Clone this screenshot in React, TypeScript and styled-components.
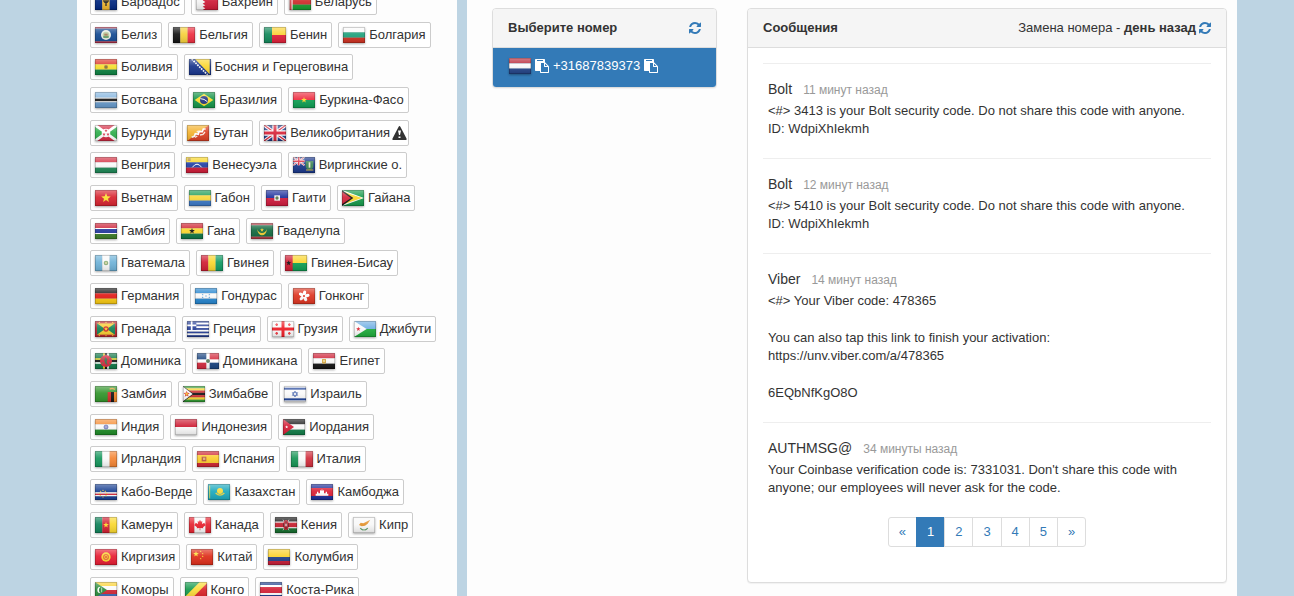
import React from "react";
import styled, { createGlobalStyle } from "styled-components";

const GlobalStyle = createGlobalStyle`
  *, *::before, *::after { box-sizing: border-box; }
  body {
    margin: 0;
    background: #bdd4e3;
    color: #333;
    font: 13px/18px "Liberation Sans", Arial, sans-serif;
  }
  a { color: #337ab7; text-decoration: none; }
  ul { list-style: none; margin: 0; padding: 0; }
`;

/* ---------- flags, drawn on a 66 x 48 canvas ---------- */

type Art = React.ReactNode;

const R = (x: number, y: number, w: number, h: number, f: string) => (
  <rect x={x} y={y} width={w} height={h} fill={f} />
);
const P = (d: string, f: string) => <path d={d} fill={f} />;
const L = (d: string, s: string, w: number) => <path d={d} stroke={s} strokeWidth={w} fill="none" />;
const C = (x: number, y: number, r: number, f: string) => <circle cx={x} cy={y} r={r} fill={f} />;

const bands = (colors: string[], weights?: number[], vertical = false): Art => {
  const w = weights ?? colors.map(() => 1);
  const total = w.reduce((a, b) => a + b, 0);
  const size = vertical ? 66 : 48;
  let at = 0;
  return colors.map((c, i) => {
    const start = (at / total) * size;
    at += w[i];
    const len = (w[i] / total) * size;
    return vertical ? (
      <rect key={i} x={start} y={0} width={len} height={48} fill={c} />
    ) : (
      <rect key={i} x={0} y={start} width={66} height={len} fill={c} />
    );
  });
};
const H = (...colors: string[]) => bands(colors);
const V = (...colors: string[]) => bands(colors, undefined, true);

const star = (cx: number, cy: number, r: number, fill: string): Art => {
  const pts = Array.from({ length: 10 }, (_, i) => {
    const a = (Math.PI / 5) * i - Math.PI / 2;
    const q = i % 2 ? r * 0.42 : r;
    return `${(cx + q * Math.cos(a)).toFixed(1)},${(cy + q * Math.sin(a)).toFixed(1)}`;
  });
  return <polygon points={pts.join(" ")} fill={fill} />;
};

const unionJack = (
  <>
    {R(0, 0, 66, 48, "#1f3a86")}
    {L("M0 0L66 48M66 0L0 48", "#fff", 10)}
    {L("M0 0L66 48M66 0L0 48", "#d8243a", 4)}
    {L("M33 0V48M0 24H66", "#fff", 16)}
    {L("M33 0V48M0 24H66", "#d8243a", 9)}
  </>
);

const flags: Record<string, Art> = {
  bb: <>{V("#00267f", "#f2b62c", "#00267f")}{L("M27 12V22Q33 30 39 22V12M33 8V36", "#222", 4)}</>,
  bh: <>{R(0, 0, 66, 48, "#ce1a36")}{P("M0 0H20L28 5L20 10L28 14L20 19L28 24L20 29L28 34L20 38L28 43L20 48H0Z", "#f4f4f4")}</>,
  by: <>{bands(["#cf2a2a", "#159a2f"], [2, 1])}{R(0, 0, 11, 48, "#f3dede")}{L("M5 0V48", "#d2454b", 5)}</>,
  bz: <>{bands(["#b8304a", "#134a92", "#b8304a"], [1, 8, 1])}{C(33, 24, 15, "#e9eee4")}{C(33, 24, 10, "#b9cda0")}{R(28, 20, 10, 6, "#a67a58")}{L("M25 30H41", "#3f8a50", 4)}</>,
  be: V("#111", "#f7d13a", "#ee2e40"),
  bj: <>{R(0, 0, 66, 24, "#fbd335")}{R(0, 24, 66, 24, "#e01f38")}{R(0, 0, 24, 48, "#11885a")}</>,
  bg: H("#fafafa", "#1fa27c", "#cf3020"),
  bo: <>{H("#dc3527", "#f6e02d", "#0d8241")}{C(33, 24, 6, "#b07b32")}{C(33, 24, 3, "#667d3c")}</>,
  ba: <>{R(0, 0, 66, 48, "#17348c")}{P("M18 0H62V46Z", "#fbd62e")}<path d="M8 0L56 48" fill="none" stroke="#fff" strokeWidth="5" strokeDasharray="5 3" /></>,
  bw: bands(["#84b5df", "#fff", "#161616", "#fff", "#6699ca"], [17, 3, 8, 3, 17]),
  br: <>{R(0, 0, 66, 48, "#149447")}{P("M5 24L33 5L61 24L33 43Z", "#fbdc2c")}{C(33, 24, 12, "#233580")}{L("M22 20Q34 20 43 29", "#fff", 3)}</>,
  bf: <>{H("#ee2b3f", "#0d9e52")}{star(33, 24, 9, "#fad829")}</>,
  bi: <>{R(0, 0, 66, 48, "#d52a43")}{P("M0 0L28 24L0 48ZM66 0L38 24L66 48Z", "#2fae4c")}{L("M0 0L66 48M66 0L0 48", "#fff", 8)}{C(33, 24, 13, "#fff")}{star(33, 17, 5, "#d52a43")}{star(27, 28, 5, "#d52a43")}{star(39, 28, 5, "#d52a43")}</>,
  bt: <>{R(0, 0, 66, 48, "#dc3f23")}{P("M0 0H66L0 48Z", "#f4b22e")}{L("M14 37L22 34L25 26L34 28L36 19L46 20L49 12L56 12", "#fff", 5)}{L("M24 37L31 33M39 30L48 28L54 21M29 22L34 18", "#fbe9de", 4)}</>,
  gb: unionJack,
  hu: H("#d32f42", "#fafafa", "#1c8755"),
  ve: <>{H("#f8d522", "#1f3fa5", "#ce1a36")}{L("M19 31Q33 12 47 31", "#fff", 3)}{R(5, 3, 9, 9, "#b48b3b")}</>,
  vg: <>{R(0, 0, 66, 48, "#18368a")}<g transform="scale(.52)">{unionJack}</g>{P("M38 12H61V27Q61 36 50 39Q38 36 38 27Z", "#3d8454")}{R(47, 16, 5, 16, "#f2ead0")}{L("M39 39H61", "#dbbd43", 3)}</>,
  vn: <>{R(0, 0, 66, 48, "#d8232f")}{star(33, 24, 15, "#fbe02e")}</>,
  ga: H("#1f9c55", "#fad83a", "#3a77c6"),
  ht: <>{H("#1b2e9c", "#cf193c")}{R(25, 16, 17, 16, "#f4f4f4")}{C(33, 24, 5, "#59764b")}</>,
  gy: <>{R(0, 0, 66, 48, "#159a4a")}{P("M0 0L66 24L0 48Z", "#fff")}{P("M0 4L60 24L0 44Z", "#fbd72c")}{P("M0 0L34 24L0 48Z", "#111")}{P("M0 5L27 24L0 43Z", "#d3233a")}</>,
  gm: bands(["#cc1f35", "#fff", "#22369b", "#fff", "#3d7d28"], [15, 3, 12, 3, 15]),
  gh: <>{H("#ce1f2e", "#fbd72c", "#0d7546")}{star(33, 24, 9, "#111")}</>,
  gp: <>{bands(["#b23b44", "#12683f", "#b23b44"], [1, 5, 1])}<path d="M18 18Q22 37 33 37Q45 37 48 18Q43 30 33 30Q23 30 18 18Z" fill="#f3cd2e" />{star(33, 21, 6, "#f3cd2e")}</>,
  gt: <>{V("#6eb2d8", "#fafafa", "#6eb2d8")}{C(33, 24, 7, "#8daf7a")}{C(33, 24, 3, "#e7dcaa")}</>,
  gn: V("#d11d33", "#fad72d", "#109a63"),
  gw: <>{R(0, 0, 66, 24, "#fbd62f")}{R(0, 24, 66, 24, "#0e9d52")}{R(0, 0, 23, 48, "#cf1b31")}{star(11, 24, 8, "#111")}</>,
  de: H("#181818", "#e21b17", "#f8c911"),
  hn: <>{H("#2585cf", "#fafafa", "#2585cf")}{star(33, 24, 3, "#4d98d6")}{star(23, 20, 3, "#4d98d6")}{star(43, 20, 3, "#4d98d6")}{star(23, 28, 3, "#4d98d6")}{star(43, 28, 3, "#4d98d6")}</>,
  hk: <>{R(0, 0, 66, 48, "#de3420")}{[0, 72, 144, 216, 288].map((a) => <ellipse key={a} cx="33" cy="15" rx="5" ry="8" fill="#fff" transform={`rotate(${a + 10} 33 24)`} />)}{C(33, 24, 3, "#de3420")}</>,
  gd: <>{R(0, 0, 66, 48, "#b8262f")}{R(6, 7, 54, 34, "#f6cd2e")}{P("M6 7L30 24L6 41ZM60 7L36 24L60 41Z", "#128254")}{C(33, 24, 8, "#cf2a2a")}{star(33, 24, 6, "#fbd72c")}{[13, 33, 53].map((x) => <React.Fragment key={x}>{star(x, 4, 3, "#fbd72c")}{star(x, 44, 3, "#fbd72c")}</React.Fragment>)}</>,
  gr: <>{bands(["#263f97", "#fff", "#263f97", "#fff", "#263f97", "#fff", "#263f97", "#fff", "#263f97"])}{R(0, 0, 28, 27, "#263f97")}{L("M14 0V27M0 13H28", "#fff", 5)}</>,
  ge: <>{R(0, 0, 66, 48, "#fafafa")}{L("M33 0V48M0 24H66", "#ee1b24", 9)}{L("M14 7V15M10 11H18M52 7V15M48 11H56M14 33V41M10 37H18M52 33V41M48 37H56", "#ee3b42", 4)}</>,
  dj: <>{H("#6faee3", "#1dab3a")}{P("M0 0L38 24L0 48Z", "#fafafa")}{star(13, 24, 7, "#dc2230")}</>,
  dm: <>{R(0, 0, 66, 48, "#0f7747")}{L("M0 18H66M27 0V48", "#fbd82e", 5)}{L("M0 24H66M33 0V48", "#151515", 6)}{L("M0 30H66M39 0V48", "#fff", 5)}{C(33, 24, 18, "#d5283e")}{P("M30 12L37 18L35 28L38 37L30 31L28 21Z", "#40704f")}{[22, 44].map((x) => <React.Fragment key={x}>{C(x, 18, 2, "#4b8b4b")}{C(x, 30, 2, "#4b8b4b")}</React.Fragment>)}</>,
  do: <>{R(0, 0, 66, 48, "#fff")}{R(0, 0, 28, 19, "#18437f")}{R(38, 0, 28, 19, "#d22a3d")}{R(0, 29, 28, 19, "#d22a3d")}{R(38, 29, 28, 19, "#18437f")}{C(33, 24, 6, "#547b5a")}</>,
  eg: <>{H("#ce1f35", "#fafafa", "#141414")}{P("M27 18H39V30L33 33L27 30Z", "#d6a944")}{C(33, 24, 3, "#f5e4a9")}</>,
  zm: <>{R(0, 0, 66, 48, "#31952a")}{R(38, 18, 10, 30, "#d62c2c")}{R(48, 18, 9, 30, "#171717")}{R(57, 18, 9, 30, "#f08528")}{L("M44 9L52 7L60 10", "#e59b2f", 4)}</>,
  zw: <>{bands(["#319a32", "#fad62d", "#cf2a2b", "#151515", "#cf2a2b", "#fad62d", "#319a32"])}{P("M0 0L32 24L0 48Z", "#111")}{P("M0 2L29 24L0 46Z", "#fafafa")}{star(11, 24, 10, "#d92e2e")}{star(11, 24, 6, "#f4c936")}</>,
  il: <>{R(0, 0, 66, 48, "#fafafa")}{R(0, 5, 66, 6, "#1e4298")}{R(0, 37, 66, 6, "#1e4298")}<path d="M33 15L41 28H25ZM33 33L25 20H41Z" fill="none" stroke="#3556a6" strokeWidth="2" /></>,
  in: <>{H("#f68e36", "#fafafa", "#1d8a25")}<circle cx="33" cy="24" r="6" fill="#a2a5d4" stroke="#4b53a4" strokeWidth="2" /></>,
  id: H("#ce1c33", "#fafafa"),
  jo: <>{H("#1c1c1c", "#fafafa", "#0f7b46")}{P("M0 0L33 24L0 48Z", "#d41d36")}{star(11, 24, 5, "#fff")}</>,
  ie: V("#15975c", "#fafafa", "#f58533"),
  es: <>{bands(["#ce2530", "#fbcb2b", "#ce2530"], [1, 2, 1])}{R(14, 17, 14, 14, "#b6563b")}{R(18, 20, 7, 7, "#ddad77")}</>,
  it: V("#159454", "#fafafa", "#d12d3c"),
  cv: <>{bands(["#173f92", "#fff", "#d3263a", "#fff", "#173f92"], [25, 4, 4, 4, 11])}{[[24, 19], [31, 22], [35, 28], [33, 35], [24, 39], [16, 35], [13, 28], [17, 22]].map(([x, y]) => <React.Fragment key={`${x}-${y}`}>{star(x, y, 3, "#f2cb38")}</React.Fragment>)}</>,
  kz: <>{R(0, 0, 66, 48, "#1ba9be")}{C(36, 21, 9, "#f5da38")}{L("M23 27Q36 40 49 27", "#e7d544", 4)}{L("M5 5V43", "#c8d45f", 3)}</>,
  kh: <>{bands(["#1b2c96", "#dc1e35", "#1b2c96"], [1, 2, 1])}{P("M14 35V29H18V23H22V28H27V22L29 17L31 21L33 14L35 21L37 17L39 22V28H44V23H48V29H52V35Z", "#fff")}</>,
  cm: <>{V("#0f8259", "#d21f32", "#fad82d")}{star(33, 24, 9, "#fbd72c")}</>,
  ca: <>{bands(["#e72330", "#fafafa", "#e72330"], [1, 2, 1], true)}{P("M33 8L36 14L40 12L39 21L46 17L48 22L51 24L42 31L43 34L34 33V40H32V33L23 34L24 31L15 24L18 22L20 17L27 21L26 12L30 14Z", "#e81e2c")}</>,
  ke: <>{bands(["#151515", "#fff", "#c51e2d", "#fff", "#146c2c"], [14, 3, 14, 3, 14])}{L("M24 8L42 40M42 8L24 40", "#eee", 2)}<ellipse cx="33" cy="24" rx="8" ry="15" fill="#c51e2d" />{L("M33 12V36M26 18V30M40 18V30", "#1d1d1d", 2)}{L("M31 20V28M35 20V28", "#fff", 2)}</>,
  cy: <>{R(0, 0, 66, 48, "#f8f8f8")}{P("M18 24L23 17L31 19L40 14L52 8L44 20L36 26L26 28Z", "#e2912b")}{L("M22 33Q26 40 32 38M44 33Q40 40 34 38", "#5c9a65", 4)}</>,
  kg: <>{R(0, 0, 66, 48, "#e81c32")}{C(33, 24, 14, "#fad52d")}<circle cx="33" cy="24" r="8" fill="#f2bb31" stroke="#e4422f" strokeWidth="2" />{L("M28 20Q33 24 38 28M38 20Q33 24 28 28", "#e4422f", 2)}</>,
  cn: <>{R(0, 0, 66, 48, "#de2c18")}{star(15, 15, 9, "#fbdc30")}{star(29, 7, 3, "#fbdc30")}{star(35, 14, 3, "#fbdc30")}{star(35, 22, 3, "#fbdc30")}{star(29, 29, 3, "#fbdc30")}</>,
  co: bands(["#fbd12b", "#203f88", "#c71c36"], [2, 1, 1]),
  km: <>{H("#fbd233", "#fafafa", "#cf2434", "#3c69b8")}{P("M0 0L36 24L0 48Z", "#2b8c3c")}<path d="M17 14A10 10 0 1 0 17 34A12 12 0 0 1 17 14Z" fill="#fff" />{L("M20 17V31", "#fff", 2)}</>,
  cg: <>{R(0, 0, 66, 48, "#fbdc38")}{P("M0 0H44L0 44Z", "#159a4d")}{P("M66 4V48H22Z", "#dc2429")}</>,
  cr: bands(["#1b3c8b", "#fff", "#d52036", "#fff", "#1b3c8b"], [9, 6, 18, 6, 9]),
  nl: H("#b72536", "#fafafa", "#244489"),
};

const FlagSvg = styled.svg`
  flex: none;
  display: block;
  filter: drop-shadow(0 1px 1px rgba(0, 0, 0, 0.35));
`;

const Flag = ({ code }: { code: string }) => (
  <FlagSvg width="22" height="16" viewBox="0 0 66 48" aria-hidden="true">
    <defs>
      <linearGradient id={`gloss-${code}`} x1="0" y1="0" x2="0" y2="1">
        <stop offset="0" stopColor="#fff" stopOpacity=".4" />
        <stop offset=".45" stopColor="#fff" stopOpacity=".08" />
        <stop offset="1" stopColor="#000" stopOpacity=".12" />
      </linearGradient>
    </defs>
    {flags[code]}
    <rect width="66" height="48" fill={`url(#gloss-${code})`} />
    <rect x="1" y="1" width="64" height="46" fill="none" stroke="#000" strokeOpacity=".22" strokeWidth="3" />
  </FlagSvg>
);

/* ---------- icons ---------- */

const Icon = styled.svg`
  flex: none;
  display: block;
  fill: currentColor;
`;

const RefreshIcon = () => (
  <Icon width="12" height="12" viewBox="0 0 1536 1536" aria-hidden="true">
    <path d="M1511 928q0 5-1 7-64 268-268 434.5t-478 166.500q-146 0-282.500-55t-243.500-157l-129 129q-19 19-45 19t-45-19-19-45v-448q0-26 19-45t45-19h448q26 0 45 19t19 45-19 45l-137 137q71 66 161 102t187 36q134 0 250-65t186-179q11-17 53-117 8-23 30-23h192q13 0 22.500 9.500t9.500 22.500zm25-800v448q0 26-19 45t-45 19h-448q-26 0-45-19t-19-45 19-45l138-138q-148-137-349-137-134 0-250 65t-186 179q-11 17-53 117-8 23-30 23h-199q-13 0-22.500-9.500t-9.500-22.500v-7q65-268 270-434.500t480-166.500q146 0 284 55.500t245 156.500l130-129q19-19 45-19t45 19 19 45z" />
  </Icon>
);

const PasteIcon = () => (
  <Icon width="14" height="14" viewBox="0 0 1792 1792" aria-hidden="true">
    <path d="M768 1664h896v-640h-416q-40 0-68-28t-28-68v-416h-384v1152zm256-1440v-64q0-13-9.500-22.500t-22.500-9.500h-704q-13 0-22.500 9.500t-9.500 22.500v64q0 13 9.500 22.500t22.500 9.500h704q13 0 22.500-9.500t9.500-22.500zm256 672h299l-299-299v299zm512 128v672q0 40-28 68t-68 28h-960q-40 0-68-28t-28-68v-160h-544q-40 0-68-28t-28-68v-1344q0-40 28-68t68-28h1088q40 0 68 28t28 68v328q21 13 36 28l408 408q28 28 48 76t20 88z" />
  </Icon>
);

const WarningSvg = styled(Icon)`
  margin: 0 -3px 0 -2px;
`;

const WarningIcon = () => (
  <WarningSvg width="15" height="14" viewBox="0 0 30 28" aria-label="Внимание">
    <path fillRule="evenodd" d="M15 0Q16 0 17 2L29 25Q30 28 28 28H2Q0 28 1 25L13 2Q14 0 15 0ZM12 9L14 18H16L18 9ZM13 21V24H17V21Z" />
  </WarningSvg>
);

/* ---------- layout ---------- */

const Page = styled.div`
  display: flex;
  gap: 10px;
  height: 100vh;
  padding: 0 57px 0 77px;
  overflow: hidden;
`;

const Sidebar = styled.nav`
  flex: 0 0 380px;
  padding: 0 13px;
  background: #fdfdfd;
  overflow: hidden;
`;

const CountryRows = styled.div`
  display: grid;
  grid-auto-rows: 33px 32px 33px;
  margin-top: -11px;
`;

const CountryRow = styled.ul`
  display: flex;
  align-items: flex-start;
  gap: 6px;
`;

const CountryTag = styled.a`
  display: flex;
  align-items: center;
  gap: 4px;
  height: 26px;
  padding: 0 4px;
  border: 1px solid #ccc;
  border-radius: 2px;
  background: #fff;
  color: #333;
  white-space: nowrap;
`;

const Main = styled.main`
  flex: 1;
  display: flex;
  align-items: flex-start;
  gap: 30px;
  min-width: 0;
  padding: 8px 10px 13px 25px;
  background: #fdfdfd;
`;

const Panel = styled.section<{ $width?: number }>`
  flex: ${(p) => (p.$width ? `0 0 ${p.$width}px` : "1")};
  min-width: 0;
  border: 1px solid #ddd;
  border-radius: 4px;
  background: #fff;
  box-shadow: 0 1px 1px rgba(0, 0, 0, 0.05);
  overflow: hidden;
`;

const PanelHeader = styled.header`
  display: flex;
  align-items: center;
  justify-content: space-between;
  padding: 10px 15px;
  border-bottom: 1px solid #ddd;
  background: #f5f5f5;
`;

const PanelTitle = styled.h2`
  margin: 0;
  font-size: 13px;
  line-height: 18px;
`;

const Replacement = styled.div`
  display: flex;
  align-items: center;
  gap: 3px;
`;

const IconButton = styled.button`
  padding: 0;
  border: 0;
  background: none;
  color: #337ab7;
  cursor: pointer;
`;

const NumberRow = styled.div`
  display: flex;
  align-items: center;
  gap: 4px;
  padding: 9px 16px 12px;
  background: #337ab7;
  color: #fff;
`;

const CopyButton = styled(IconButton)`
  color: #fff;
`;

const PhoneNumber = styled.a`
  color: #fff;
`;

const PanelBody = styled.div`
  padding: 15px 15px 35px;
`;

const Message = styled.article`
  padding: 15px 5px 20px;
  border-top: 1px solid #eee;
`;

const MessageHead = styled.header`
  display: flex;
  align-items: baseline;
  gap: 11px;
  margin-bottom: 2px;
  line-height: 20px;
`;

const Sender = styled.span`
  font-size: 14px;
`;

const Time = styled.time`
  color: #999;
  font-size: 12px;
`;

const MessageText = styled.p`
  margin: 0;
  white-space: pre-line;

  & + & {
    margin-top: 19px;
  }
`;

const Pagination = styled.ul`
  display: flex;
  justify-content: center;
`;

const PageLink = styled.a<{ $active?: boolean }>`
  display: block;
  margin-left: -1px;
  padding: 5px 10px;
  border: 1px solid ${(p) => (p.$active ? "#337ab7" : "#ddd")};
  background: ${(p) => (p.$active ? "#337ab7" : "#fff")};
  color: ${(p) => (p.$active ? "#fff" : "#337ab7")};

  li:first-child > & { margin-left: 0; border-radius: 3px 0 0 3px; }
  li:last-child > & { border-radius: 0 3px 3px 0; }
`;

/* ---------- content ---------- */

type Country = [code: string, name: string, warning?: boolean];

const countries: Country[][] = [
  [["bb", "Барбадос"], ["bh", "Бахрейн"], ["by", "Беларусь"]],
  [["bz", "Белиз"], ["be", "Бельгия"], ["bj", "Бенин"], ["bg", "Болгария"]],
  [["bo", "Боливия"], ["ba", "Босния и Герцеговина"]],
  [["bw", "Ботсвана"], ["br", "Бразилия"], ["bf", "Буркина-Фасо"]],
  [["bi", "Бурунди"], ["bt", "Бутан"], ["gb", "Великобритания", true]],
  [["hu", "Венгрия"], ["ve", "Венесуэла"], ["vg", "Виргинские о."]],
  [["vn", "Вьетнам"], ["ga", "Габон"], ["ht", "Гаити"], ["gy", "Гайана"]],
  [["gm", "Гамбия"], ["gh", "Гана"], ["gp", "Гваделупа"]],
  [["gt", "Гватемала"], ["gn", "Гвинея"], ["gw", "Гвинея-Бисау"]],
  [["de", "Германия"], ["hn", "Гондурас"], ["hk", "Гонконг"]],
  [["gd", "Гренада"], ["gr", "Греция"], ["ge", "Грузия"], ["dj", "Джибути"]],
  [["dm", "Доминика"], ["do", "Доминикана"], ["eg", "Египет"]],
  [["zm", "Замбия"], ["zw", "Зимбабве"], ["il", "Израиль"]],
  [["in", "Индия"], ["id", "Индонезия"], ["jo", "Иордания"]],
  [["ie", "Ирландия"], ["es", "Испания"], ["it", "Италия"]],
  [["cv", "Кабо-Верде"], ["kz", "Казахстан"], ["kh", "Камбоджа"]],
  [["cm", "Камерун"], ["ca", "Канада"], ["ke", "Кения"], ["cy", "Кипр"]],
  [["kg", "Киргизия"], ["cn", "Китай"], ["co", "Колумбия"]],
  [["km", "Коморы"], ["cg", "Конго"], ["cr", "Коста-Рика"]],
];

const messages = [
  { from: "Bolt", time: "11 минут назад", text: ["<#> 3413 is your Bolt security code. Do not share this code with anyone.\nID: WdpiXhIekmh"] },
  { from: "Bolt", time: "12 минут назад", text: ["<#> 5410 is your Bolt security code. Do not share this code with anyone.\nID: WdpiXhIekmh"] },
  {
    from: "Viber",
    time: "14 минут назад",
    text: [
      "<#> Your Viber code: 478365",
      "You can also tap this link to finish your activation:\nhttps://unv.viber.com/a/478365",
      "6EQbNfKgO8O",
    ],
  },
  {
    from: "AUTHMSG@",
    time: "34 минуты назад",
    text: ["Your Coinbase verification code is: 7331031. Don't share this code with anyone; our employees will never ask for the code."],
  },
];

const pages = ["«", "1", "2", "3", "4", "5", "»"];

export default function App() {
  return (
    <>
      <GlobalStyle />
      <Page>
        <Sidebar>
          <CountryRows>
            {countries.map((row) => (
              <CountryRow key={row[0][0]}>
                {row.map(([code, name, warning]) => (
                  <li key={code}>
                    <CountryTag href={`#${code}`}>
                      <Flag code={code} />
                      {name}
                      {warning && <WarningIcon />}
                    </CountryTag>
                  </li>
                ))}
              </CountryRow>
            ))}
          </CountryRows>
        </Sidebar>

        <Main>
          <Panel $width={225}>
            <PanelHeader>
              <PanelTitle>Выберите номер</PanelTitle>
              <IconButton aria-label="Обновить"><RefreshIcon /></IconButton>
            </PanelHeader>
            <NumberRow>
              <Flag code="nl" />
              <CopyButton aria-label="Копировать"><PasteIcon /></CopyButton>
              <PhoneNumber href="#31687839373">+31687839373</PhoneNumber>
              <CopyButton aria-label="Копировать номер"><PasteIcon /></CopyButton>
            </NumberRow>
          </Panel>

          <Panel>
            <PanelHeader>
              <PanelTitle>Сообщения</PanelTitle>
              <Replacement>
                <span>Замена номера - <b>день назад</b></span>
                <IconButton aria-label="Обновить"><RefreshIcon /></IconButton>
              </Replacement>
            </PanelHeader>
            <PanelBody>
              {messages.map((m) => (
                <Message key={m.from + m.time}>
                  <MessageHead>
                    <Sender>{m.from}</Sender>
                    <Time>{m.time}</Time>
                  </MessageHead>
                  {m.text.map((t) => (
                    <MessageText key={t}>{t}</MessageText>
                  ))}
                </Message>
              ))}
              <Pagination>
                {pages.map((p) => (
                  <li key={p}>
                    <PageLink href="#" $active={p === "1"}>{p}</PageLink>
                  </li>
                ))}
              </Pagination>
            </PanelBody>
          </Panel>
        </Main>
      </Page>
    </>
  );
}
